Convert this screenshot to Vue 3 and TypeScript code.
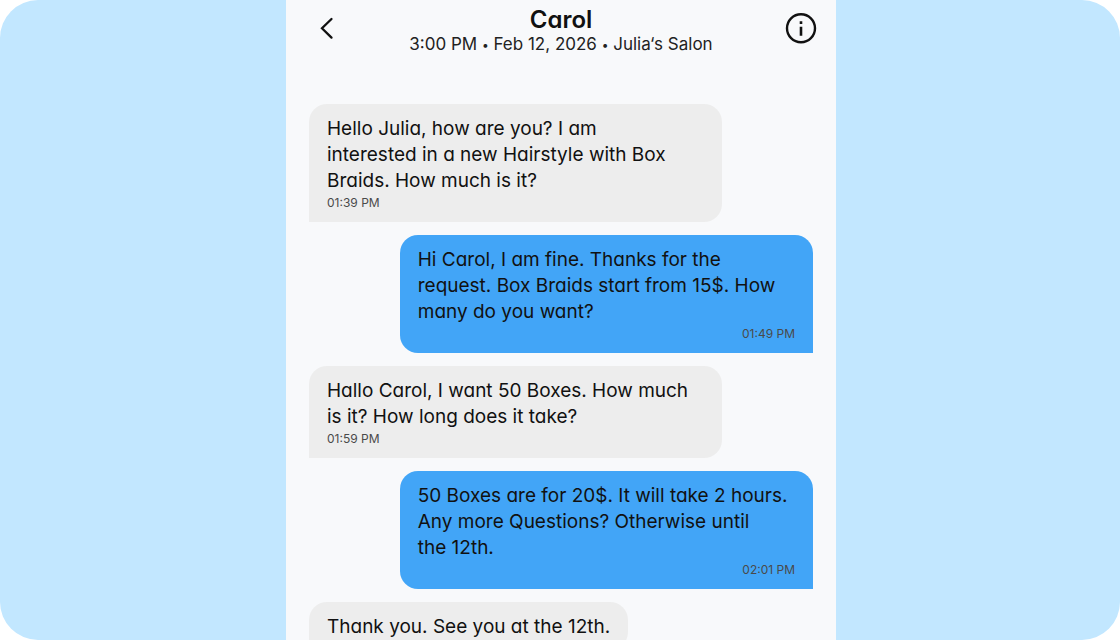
<script setup lang="ts">
interface Message {
  id: number
  mine: boolean
  lines: string[]
  time?: string
}

const details: string[] = ['3:00 PM', 'Feb 12, 2026', 'Julia‘s Salon']

const messages: Message[] = [
  {
    id: 1,
    mine: false,
    lines: ['Hello Julia, how are you? I am', 'interested in a new Hairstyle with Box', 'Braids. How much is it?'],
    time: '01:39 PM',
  },
  {
    id: 2,
    mine: true,
    lines: ['Hi Carol, I am fine. Thanks for the', 'request. Box Braids start from 15$. How', 'many do you want?'],
    time: '01:49 PM',
  },
  {
    id: 3,
    mine: false,
    lines: ['Hallo Carol, I want 50 Boxes. How much', 'is it? How long does it take?'],
    time: '01:59 PM',
  },
  {
    id: 4,
    mine: true,
    lines: ['50 Boxes are for 20$. It will take 2 hours.', 'Any more Questions? Otherwise until', 'the 12th.'],
    time: '02:01 PM',
  },
  { id: 5, mine: false, lines: ['Thank you. See you at the 12th.'] },
]
</script>

<template>
  <div class="stage">
    <main class="chat">
      <header class="bar">
        <button class="icon-button" type="button" aria-label="Back">
          <svg width="32" height="32" viewBox="0 0 32 32" fill="none" stroke="currentColor" stroke-width="2.3">
            <path d="M26.5 7 17 16.3l9.5 9.3" stroke-linecap="round" stroke-linejoin="miter" />
          </svg>
        </button>
        <div class="heading">
          <h1>Carol</h1>
          <p>
            <template v-for="(d, i) in details" :key="d"><span v-if="i > 0" class="gap">{{ ' ' }}<span class="dot">•</span>{{ ' ' }}</span>{{ d }}</template>
          </p>
        </div>
        <button class="icon-button" type="button" aria-label="Appointment details">
          <svg width="32" height="32" viewBox="0 0 32 32" fill="none">
            <circle cx="16" cy="16.3" r="14" stroke="currentColor" stroke-width="2.4" />
            <path d="M14.7 9.3h2.6v2.6h-2.6zM14.7 14.8h2.6v9h-2.6z" fill="currentColor" />
          </svg>
        </button>
      </header>
      <section class="thread" aria-label="Messages">
        <article
          v-for="m in messages"
          :key="m.id"
          class="bubble"
          :class="{ mine: m.mine, full: m.lines.length > 1 }"
        >
          <p class="text">{{ m.lines.join('\n') }}</p>
          <time v-if="m.time">{{ m.time }}</time>
        </article>
      </section>
    </main>
  </div>
</template>

<style>
body {
  margin: 0;
  background: #ffffff;
}
</style>

<style scoped>
.stage {
  display: grid;
  grid-template-columns: 286fr 550fr 284fr;
  height: 100vh;
  overflow: hidden;
  border-radius: 38px;
  background: #c2e7ff;
  font-family: Inter, "Liberation Sans", sans-serif;
  color: #111111;
}
.chat {
  grid-column: 2;
  min-width: 0;
  background: #f8f9fb;
}
.bar {
  display: grid;
  grid-template-columns: 32px 1fr 32px;
  align-items: center;
  height: 56px;
  padding: 0 19px;
}
.icon-button {
  display: block;
  width: 32px;
  height: 32px;
  padding: 0;
  border: 0;
  background: none;
  color: inherit;
  cursor: pointer;
}
.icon-button svg {
  display: block;
}
.heading {
  padding-top: 4px;
  text-align: center;
}
h1 {
  margin: 0;
  font-size: 24px;
  font-weight: 600;
  line-height: 28px;
  font-feature-settings: "cv11";
}
.heading p {
  margin: 0;
  font-size: 17px;
  line-height: 20px;
  color: #222222;
}
.gap {
  white-space: pre;
}
.dot {
  font-size: 12px;
  line-height: 12px;
  vertical-align: middle;
}
.thread {
  display: flex;
  flex-direction: column;
  align-items: flex-start;
  gap: 13px;
  padding: 48px 23px 24px;
}
.bubble {
  box-sizing: border-box;
  max-width: 82%;
  padding: 12px 18px 10px;
  border-radius: 18px 18px 18px 0;
  background: #ededed;
  font-feature-settings: "cv11";
}
.bubble.full {
  width: 82%;
}
.bubble.mine {
  align-self: flex-end;
  border-radius: 18px 18px 0 18px;
  background: #42a5f7;
}
.text {
  margin: 0;
  font-size: 19px;
  line-height: 26px;
  white-space: pre-line;
}
time {
  display: block;
  font-size: 12px;
  line-height: 18px;
  color: #4a4a4a;
}
.mine time {
  text-align: right;
}
</style>
